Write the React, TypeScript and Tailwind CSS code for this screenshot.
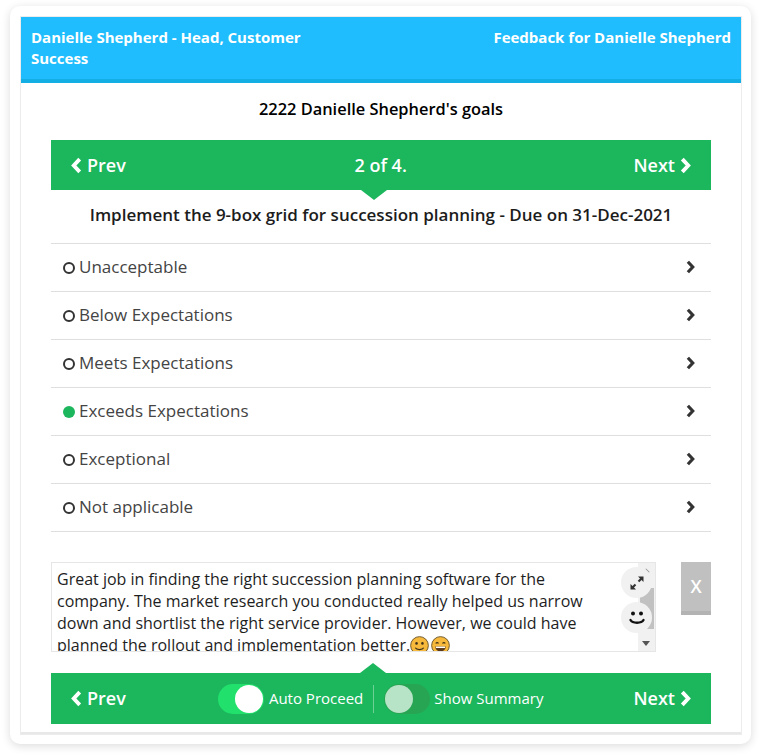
import React from 'react';

const options = [
  { label: 'Unacceptable', selected: false },
  { label: 'Below Expectations', selected: false },
  { label: 'Meets Expectations', selected: false },
  { label: 'Exceeds Expectations', selected: true },
  { label: 'Exceptional', selected: false },
  { label: 'Not applicable', selected: false },
];

const Chevron = ({ dir, className }: { dir: 'left' | 'right'; className: string }) => (
  <svg viewBox="0 0 12 18" className={className} fill="none" stroke="currentColor" strokeWidth="4.2">
    <polyline points={dir === 'left' ? '9.5,2 3,9 9.5,16' : '2.5,2 9,9 2.5,16'} />
  </svg>
);

const NavButton = ({ dir }: { dir: 'left' | 'right' }) => (
  <div className="flex items-center gap-[5px] text-[18px] font-semibold text-white">
    {dir === 'left' && <Chevron dir="left" className="h-[17px] w-[11px]" />}
    <span>{dir === 'left' ? 'Prev' : 'Next'}</span>
    {dir === 'right' && <Chevron dir="right" className="h-[17px] w-[11px]" />}
  </div>
);

const Toggle = ({ on }: { on: boolean }) => (
  <div className={`flex h-[30px] w-[46px] items-center rounded-full px-[1px] ${on ? 'justify-end bg-[#21e16c]' : 'justify-start bg-[#27a552]'}`}>
    <div className={`h-[28px] w-[28px] rounded-full ${on ? 'bg-white' : 'bg-[#b7e3c7]'}`} />
  </div>
);

const Smile = () => (
  <svg viewBox="0 0 18 18" className="inline-block h-[19px] w-[19px] align-[-4px]">
    <circle cx="9" cy="9" r="8.4" fill="#f6b93b" stroke="#6b5426" strokeWidth="0.9" />
    <circle cx="6.2" cy="7" r="1.2" fill="#40321a" />
    <circle cx="11.8" cy="7" r="1.2" fill="#40321a" />
    <path d="M5 11.2c1.2 2.2 6.8 2.2 8 0" fill="none" stroke="#40321a" strokeWidth="1.1" />
  </svg>
);

const Grin = () => (
  <svg viewBox="0 0 18 18" className="ml-[2px] inline-block h-[19px] w-[19px] align-[-4px]">
    <circle cx="9" cy="9" r="8.4" fill="#f6b93b" stroke="#6b5426" strokeWidth="0.9" />
    <path d="M4.500 7.200c.6-1.200 2-1.200 2.600 0M10.900 7.200c.6-1.200 2-1.200 2.600 0" fill="none" stroke="#40321a" strokeWidth="1" />
    <path d="M4 10h10c0 2.800-2.200 4.600-5 4.600S4 12.800 4 10z" fill="#5a3a1a" />
    <path d="M4.600 10h8.800v1.400H4.600z" fill="#fff" />
  </svg>
);

export default function App() {
  return (
    <div className="min-h-[756px] w-[759px] bg-white pl-[10px] pt-[6px] font-['Open_Sans',sans-serif]">
      <div className="h-[738px] w-[741px] rounded-[10px] bg-white p-[11px] shadow-[0_2px_10px_rgba(0,0,0,0.14)]">
        <div className="h-[717px] w-[720px] border-b-[2px] border-[#e8e8e8] shadow-[0_0_0_1px_#ececec]">
          <div className="flex h-[66px] justify-between border-b-[4px] border-[#12aee4] bg-[#1fbdfd] px-[10px] pt-[10px] text-[15px] font-bold leading-[21px] text-white">
            <div className="w-[320px]">Danielle Shepherd - Head, Customer Success</div>
            <div>Feedback for Danielle Shepherd</div>
          </div>

          <div className="px-[30px]">
            <div className="flex h-[57px] items-center justify-center pb-[4px] text-[16.400px] font-semibold text-black">
              2222 Danielle Shepherd's goals
            </div>

            <div className="relative flex h-[50px] items-center justify-between bg-[#1cb65d] px-[20px]">
              <NavButton dir="left" />
              <div className="pl-[2px] text-[18px] font-semibold text-white">2 of 4.</div>
              <NavButton dir="right" />
              <div className="absolute left-[310px] top-[50px] h-0 w-0 border-x-[13px] border-t-[10px] border-x-transparent border-t-[#1cb65d]" />
            </div>

            <div className="flex h-[54px] items-center justify-center border-b border-[#dfdfdf] pb-[3px] text-[17px] font-semibold text-[#1c1c1c]">
              Implement the 9-box grid for succession planning - Due on 31-Dec-2021
            </div>

            {options.map((o) => (
              <div key={o.label} className="flex h-[48px] items-center justify-between border-b border-[#dfdfdf] pb-[2px] pl-[12px] pr-[16px] text-[#333]">
                <div className="flex items-center gap-[4px] text-[17px] text-[#444]">
                  <span className={`mt-[2px] h-[12px] w-[12px] rounded-full ${o.selected ? 'bg-[#1cb65d]' : 'border-[2px] border-[#333]'}`} />
                  <span>{o.label}</span>
                </div>
                <Chevron dir="right" className="h-[14px] w-[9px]" />
              </div>
            ))}

            <div className="mt-[30px] flex justify-between">
              <div className="relative h-[90px] w-[605px] overflow-hidden border border-[#e6e6e6] pl-[5px] pt-[5px] text-[16px] leading-[22px] text-[#1e1e1e]">
                <div className="w-[540px]">
                  Great job in finding the right succession planning software for the company. The market research you conducted really helped us narrow down and shortlist the right service provider. However, we could have planned the rollout and implementation better.
                  <Smile />
                  <Grin />
                </div>
                <div className="absolute bottom-0 right-0 top-0 w-[17px] bg-[#f1f1f1]">
                  <div className="absolute left-[2px] right-[1px] top-[25px] h-[41px] bg-[#c1c1c1]" />
                  <div className="absolute left-[7px] top-[7px] h-[1px] w-[5px] rotate-45 bg-[#999]" />
                  <div className="absolute bottom-[5px] left-[4px] h-0 w-0 border-x-[4px] border-t-[5px] border-x-transparent border-t-[#555]" />
                </div>
                <div className="absolute left-[569px] top-[4px] flex h-[31px] w-[31px] items-center justify-center rounded-full bg-[#f1f1f1]">
                  <svg viewBox="0 0 16 16" className="h-[16px] w-[16px]" fill="#333" stroke="#333">
                    <path d="M9.500 6.500 13 3" strokeWidth="2.200" />
                    <path d="M9 1.500h5.500V7z" stroke="none" />
                    <path d="M6.500 9.500 3 13" strokeWidth="2.200" />
                    <path d="M1.500 9v5.500H7z" stroke="none" />
                  </svg>
                </div>
                <div className="absolute left-[569px] top-[39px] flex h-[31px] w-[31px] items-center justify-center rounded-full bg-[#f1f1f1]">
                  <svg viewBox="0 0 18 18" className="h-[18px] w-[18px]" fill="none">
                    <circle cx="5" cy="4.500" r="2" fill="#111" />
                    <circle cx="13" cy="4.500" r="2" fill="#111" />
                    <path d="M2.500 11c2 3.600 11 3.600 13 0" stroke="#111" strokeWidth="2.400" strokeLinecap="round" />
                  </svg>
                </div>
              </div>
              <div className="flex h-[53px] w-[30px] items-center justify-center border-b-[4px] border-[#b3b3b3] bg-[#c0c0c0] text-[18px] font-semibold text-white">
                X
              </div>
            </div>

            <div className="relative mt-[21px] flex h-[51px] items-center justify-between bg-[#1cb65d] px-[20px]">
              <div className="absolute left-[309px] top-[-10px] h-0 w-0 border-x-[13px] border-b-[10px] border-x-transparent border-b-[#1cb65d]" />
              <NavButton dir="left" />
              <div className="ml-[2px] flex items-center text-[15px] text-white">
                <Toggle on />
                <span className="ml-[5px]">Auto Proceed</span>
                <div className="mx-[10px] h-[28px] w-px bg-[#6fd096]" />
                <Toggle on={false} />
                <span className="ml-[4px]">Show Summary</span>
              </div>
              <NavButton dir="right" />
            </div>
          </div>
        </div>
      </div>
    </div>
  );
}
